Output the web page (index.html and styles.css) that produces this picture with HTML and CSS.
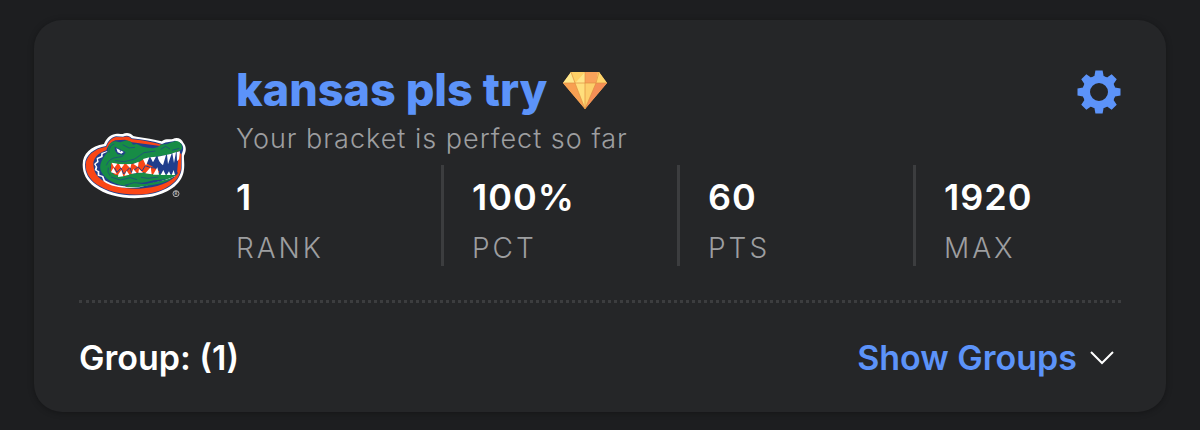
FILE: index.html
```html
<!DOCTYPE html>
<html lang="en">
<head>
    <meta charset="UTF-8">
    <meta name="viewport" content="width=device-width, initial-scale=1.0">
    <title>My Bracket</title>
    <link rel="stylesheet" href="styles.css">
</head>
<body>

    <main class="card">
        <div class="entry">
            <svg class="team-logo" viewBox="20 20 315 201" role="img" aria-label="Florida Gators">
                <!-- oval -->
                <path fill="#fff" d="M22 118 C22 84 47 63 86 56 C92 42 102 28 120 26 C130 24 136 26 142 26 C153 20 166 22 174 32 L184 34 C210 39 236 41 259 48 C270 38 285 43 292 41 C307 34 319 41 324 52 C334 63 333 77 326 91 C325 103 329 118 325 139 C317 178 278 205 222 215 C158 225 96 213 57 184 C34 166 22 145 22 118Z"/>
                <path fill="#203e8c" d="M29 118 C30 88 57 68 92 62 C98 48 107 36 122 33 L143 34 C153 29 163 30 169 39 C203 43 235 48 260 56 C275 47 287 51 299 46 L317 54 C326 64 325 74 319 86 L319 128 C317 168 275 198 219 207 C160 216 101 205 63 178 C40 162 29 143 29 118Z"/>
                <path fill="#fa4616" d="M31 119 C32 90 58 70 93 64 C99 50 108 38 122 35 L143 36 C153 32 161 32 168 41 C199 44 232 50 254 57 L302 72 L318 87 L317 128 C315 166 274 196 218 205 C160 213 103 203 64 177 C42 160 31 142 31 119Z"/>
                <path fill="#203e8c" d="M55 125 C50 101 66 84 93 75 C98 61 106 50 120 45 L149 43 L170 51 L250 61 L307 80 L306 145 C288 173 243 186 192 190 C143 192 94 180 69 155 C60 145 56 135 55 125Z"/>
                <!-- back ridges -->
                <path fill="#fff" d="M96 77 L78 83 L77 92 L64 98 L65 108 L56 116 L61 124 L58 134 L67 140 L67 151 L80 155 L85 168 C111 188 154 190 193 186 L275 164 L302 151 L265 158 L175 168 L107 151 L84 123Z"/>
                <path fill="#203e8c" d="M96 79 L82 86 L82 95 L68 101 L70 110 L61 117 L66 125 L64 134 L72 138 L72 148 L84 152 L89 165 C116 182 154 187 192 183 L270 163 L298 151 L260 153 L170 162 L100 142Z"/>
                <!-- head -->
                <path fill="#178c46" d="M97 80 C98 61 105 49 120 48 L134 51 L149 46 C161 45 168 49 173 58 L184 56 L202 64 C221 68 235 71 248 65 C258 52 272 60 282 53 L302 47 C316 48 320 58 321 69 C314 80 294 84 278 88 L254 92 L230 96 L207 101 L187 112 L163 117 L142 119 L117 115 L104 124 L110 144 L140 150 L172 145 L209 141 L236 145 L304 146 C292 163 263 163 236 165 L204 172 L180 177 L145 181 C111 175 87 158 77 138 C70 120 79 100 97 80Z"/>
                <path fill="#178c46" d="M148 184 L174 174 L206 176 L257 166 L292 159 C272 173 237 179 211 182 C188 186 166 187 148 184Z"/>
                <!-- mouth -->
                <path fill="#203e8c" d="M236 98 L304 83 L309 93 L306 147 L258 147 L245 133 L205 112Z"/>
                <path fill="#fa4616" d="M108 114 L130 116 L168 117 L190 111 L207 100 L212 114 L229 122 L252 138 L247 147 L223 146 L205 141 L177 143 L145 153 L119 148 L106 138Z"/>
                <path fill="#fa4616" d="M309 91 L317 92 L317 128 L310 144 L306 138Z"/>
                <path class="mouth-line" d="M117 127 L125 141 L137 128 L145 146 L164 126 L169 142 L188 124 L200 137 L210 121 L226 127 L244 128"/>
                <!-- teeth -->
                <path fill="#fff" d="M109 112 L126 115 L117 127ZM131 116 L147 117 L138 129ZM153 117 L168 116 L165 129ZM174 116 L190 109 L188 125ZM203 101 L222 96 L212 121ZM225 96 L242 94 L233 111ZM247 94 L272 89 L263 120 C254 113 249 104 247 94ZM275 88 L289 85 L278 117ZM291 84 L302 81 L296 113ZM304 81 L314 78 L311 102 L305 108ZM107 141 L114 127 L124 146ZM129 147 L138 134 L144 153 L128 155ZM147 151 L154 136 L162 148ZM168 145 L174 131 L184 143ZM189 142 L191 131 L203 142ZM210 144 L226 126 L229 147ZM233 148 L246 126 L251 148ZM256 149 L264 134 L271 149ZM274 149 L281 138 L286 149ZM289 149 L295 134 L299 149Z"/>
                <!-- eye and scale lines -->
                <path fill="#203e8c" d="M118 64 L149 79 L145 88 L127 87 L119 76Z"/>
                <path fill="#fff" d="M123 69 L145 80 L138 85 L127 81Z"/>
                <circle fill="#203e8c" cx="135" cy="77" r="2"/>
                <path class="logo-line" d="M101 82 Q102 58 117 56 M142 58 L161 68 L179 66 M150 80 Q146 95 126 96 Q101 98 93 120 M99 127 Q94 140 104 151 M119 106 L148 109 L178 101 L206 82 L240 77 M256 72 L271 63 L284 71 M290 75 L312 69 M107 155 L135 164 L165 157 L185 163 M197 156 L218 159 L249 155 M148 180 L176 172 L212 174 L261 165"/>
                <!-- registered mark -->
                <circle class="mark-ring" cx="302" cy="205" r="9"/>
                <text class="mark-text" x="302" y="210">R</text>
            </svg>

            <div class="details">
                <div class="title-row">
                    <h1 class="title">
                        <a href="#">kansas pls try</a>
                        <svg class="gem" viewBox="0 0 44 37" role="img" aria-label="Perfect bracket">
                            <path fill="#fdbb58" d="M8 0 H36 L44 11 L22 37 L0 11Z"/>
                            <path fill="#ffd066" d="M8 0 H22 L12 11Z"/>
                            <path fill="#ffe588" d="M22 0 V11 H12Z"/>
                            <path fill="#f9a25a" d="M22 0 H35 L33 11 H22Z"/>
                            <path fill="#ffd56c" d="M35 0 L33 11 H44 L36 0Z"/>
                            <path fill="#ffe88d" d="M8 0 L12 11 L0 11Z"/>
                            <path fill="#f8a052" d="M0 11 H12 L22 37Z"/>
                            <path fill="#ffdf7c" d="M12 11 H22 V37Z"/>
                            <path fill="#fdcf6b" d="M22 11 H33 L22 37Z"/>
                            <path fill="#f58f56" d="M33 11 H44 L22 37Z"/>
                            <path fill="none" stroke="#df9144" stroke-width=".7" d="M0 11 H44 M8 0 L12 11 L22 37 L33 11 L36 0 M22 0 V37"/>
                        </svg>
                    </h1>
                    <button class="settings" type="button" aria-label="Settings">
                        <svg viewBox="-22 -22 44 44" aria-hidden="true">
                            <circle r="12.75" fill="none" stroke="currentColor" stroke-width="7.5"/>
                            <g fill="currentColor">
                                <path id="teeth" d="M-3.6 -21.5 H3.6 L4.6 -16 L7.5 -14 H-7.5 L-4.6 -16Z M-3.6 21.5 H3.6 L4.6 16 L7.5 14 H-7.5 L-4.6 16Z"/>
                                <use href="#teeth" transform="rotate(45)"/>
                                <use href="#teeth" transform="rotate(90)"/>
                                <use href="#teeth" transform="rotate(135)"/>
                            </g>
                        </svg>
                    </button>
                </div>
                <p class="subtitle">Your bracket is perfect so far</p>

                <dl class="stats">
                    <div class="stat">
                        <dt>RANK</dt>
                        <dd>1</dd>
                    </div>
                    <div class="stat">
                        <dt>PCT</dt>
                        <dd>100%</dd>
                    </div>
                    <div class="stat">
                        <dt>PTS</dt>
                        <dd>60</dd>
                    </div>
                    <div class="stat">
                        <dt>MAX</dt>
                        <dd>1920</dd>
                    </div>
                </dl>
            </div>
        </div>

        <div class="groups">
            <span>Group: (1)</span>
            <button class="show-groups" type="button">
                Show Groups
                <svg class="chevron" viewBox="0 0 26 16" aria-hidden="true">
                    <path d="M2 2 L13 13 L24 2"/>
                </svg>
            </button>
        </div>
    </main>

</body>
</html>
```
FILE: styles.css
```css
* {
    box-sizing: border-box;
}
body {
    margin: 0;
    padding: 20px 34px 18px;
    background: #1d1e20;
    color: #fff;
    font-family: Inter, "Liberation Sans", sans-serif;
}
h1, p, dl, dd {
    margin: 0;
}
button {
    padding: 0;
    border: none;
    background: none;
    color: #5c93f9;
    font: inherit;
    cursor: pointer;
}
.card {
    padding: 44px 45px 0;
    border-radius: 28px;
    background: #252628;
    box-shadow: 0 1px 6px rgba(0, 0, 0, 0.3);
}

/* Bracket entry */
.entry {
    display: flex;
    align-items: center;
    padding-bottom: 34px;
    border-bottom: 3px dotted #3c3d3f;
}
.team-logo {
    flex: none;
    width: 105px;
    height: 67px;
    margin: 0 49px 0 3px;
}
.logo-line {
    fill: none;
    stroke: #203e8c;
    stroke-width: 2;
}
.mouth-line {
    fill: none;
    stroke: #203e8c;
    stroke-width: 3;
}
.mark-ring {
    fill: none;
    stroke: #b5b5b5;
    stroke-width: 3;
}
.mark-text {
    fill: #b5b5b5;
    font-size: 13px;
    font-weight: 700;
    text-anchor: middle;
}
.details {
    flex: 1;
}
.title-row {
    display: flex;
    align-items: flex-end;
    justify-content: space-between;
}
.title {
    display: flex;
    align-items: center;
    gap: 16px;
    font-size: 45px;
    font-weight: 800;
    line-height: 52px;
}
.title a {
    color: #5c93f9;
    text-decoration: none;
}
.gem {
    width: 44px;
    height: 37px;
}
.settings {
    padding: 2px 0;
}
.settings svg {
    display: block;
    width: 44px;
    height: 44px;
}
.subtitle {
    margin-top: 5px;
    color: #9d9ea0;
    font-size: 27px;
    font-weight: 300;
    line-height: 36px;
    letter-spacing: 1px;
}

/* Stats */
.stats {
    display: grid;
    grid-template-columns: repeat(4, 1fr);
    margin: 8px -31px 0 -28px;
}
.stat {
    display: flex;
    flex-direction: column-reverse;
    gap: 9px;
    padding: 8px 0 0 28px;
    border-right: 3px solid #3c3d3f;
}
.stat:last-child {
    border-right: none;
}
.stat dt {
    color: #9d9ea0;
    font-size: 28px;
    font-weight: 300;
    line-height: 36px;
    letter-spacing: 3px;
}
.stat dd {
    font-size: 36px;
    font-weight: 600;
    line-height: 48px;
    letter-spacing: 1px;
}

/* Groups */
.groups {
    display: flex;
    align-items: center;
    justify-content: space-between;
    padding: 33px 6px 32px 0;
    font-size: 34px;
    font-weight: 600;
    line-height: 44px;
}
.show-groups {
    display: flex;
    align-items: center;
    gap: 12px;
}
.chevron {
    width: 26px;
    height: 16px;
    fill: none;
    stroke: #fff;
    stroke-width: 2;
}
```
